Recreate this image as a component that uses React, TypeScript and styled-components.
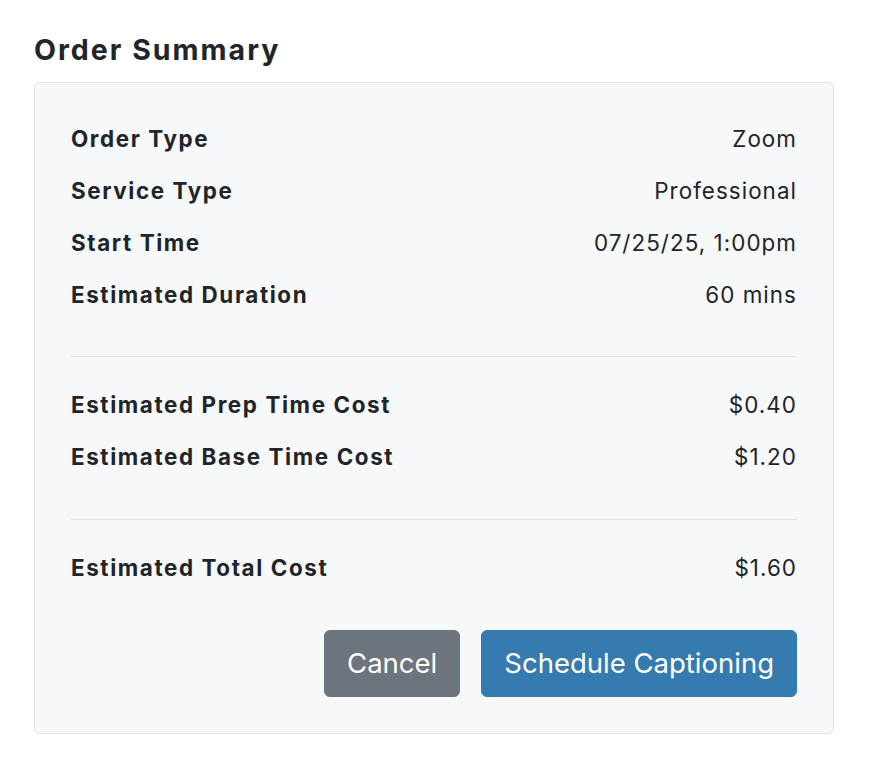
import styled, { createGlobalStyle } from "styled-components";

const GlobalStyle = createGlobalStyle`
  html, body {
    margin: 0;
    padding: 0;
    background: #ffffff;
  }
  body {
    font-family: Inter, "Liberation Sans", Arial, sans-serif;
    color: #212529;
    -webkit-font-smoothing: antialiased;
  }
`;

type Line = { label: string; value: string };

const details: Line[] = [
  { label: "Order Type", value: "Zoom" },
  { label: "Service Type", value: "Professional" },
  { label: "Start Time", value: "07/25/25, 1:00pm" },
  { label: "Estimated Duration", value: "60 mins" },
];

const costs: Line[] = [
  { label: "Estimated Prep Time Cost", value: "$0.40" },
  { label: "Estimated Base Time Cost", value: "$1.20" },
];

const SummaryRows = ({ items }: { items: Line[] }) => (
  <StyledSection>
    {items.map((item) => (
      <StyledRow key={item.label}>
        <StyledLabel>{item.label}</StyledLabel>
        <StyledValue>{item.value}</StyledValue>
      </StyledRow>
    ))}
  </StyledSection>
);

export default function App() {
  return (
    <>
      <GlobalStyle />
      <StyledPage>
        <StyledTitle>Order Summary</StyledTitle>
        <StyledCard>
          <SummaryRows items={details} />
          <StyledDivider />
          <SummaryRows items={costs} />
          <StyledDivider />
          <SummaryRows
            items={[{ label: "Estimated Total Cost", value: "$1.60" }]}
          />
          <StyledActions>
            <StyledButton $variant="secondary">Cancel</StyledButton>
            <StyledButton $variant="primary">Schedule Captioning</StyledButton>
          </StyledActions>
        </StyledCard>
      </StyledPage>
    </>
  );
}

const StyledPage = styled.div`
  padding: 33px 38px 27px 34px;
  display: flex;
  flex-direction: column;
`;

const StyledTitle = styled.h5`
  margin: 0 0 15px;
  font-size: 28.5px;
  font-weight: 700;
  line-height: 33.6px;
  letter-spacing: 2px;
`;

const StyledCard = styled.div`
  background: #f7f8fa;
  border: 1px solid #dee2e6;
  border-radius: 6px;
  padding: 39px 36px 36px;
  display: flex;
  flex-direction: column;
`;

const StyledSection = styled.div`
  display: flex;
  flex-direction: column;
  gap: 18.4px;
`;

const StyledRow = styled.div`
  display: flex;
  justify-content: space-between;
  align-items: center;
  font-size: 22.4px;
  line-height: 33.6px;
`;

const StyledLabel = styled.span`
  font-weight: 700;
  letter-spacing: 1.6px;
`;

const StyledValue = styled.span`
  font-weight: 400;
  letter-spacing: 1.05px;
  text-align: right;
`;

const StyledDivider = styled.hr`
  margin: 45px 0 31px;
  border: 0;
  border-top: 1px solid #dfe2e6;
  opacity: 1;
`;

const StyledActions = styled.div`
  display: flex;
  justify-content: flex-end;
  gap: 21px;
  margin-top: 46px;
`;

const StyledButton = styled.button<{ $variant: "primary" | "secondary" }>`
  font-family: inherit;
  font-size: 27.5px;
  font-weight: 400;
  line-height: 43px;
  padding: 11px 22px;
  border-radius: 6px;
  color: #ffffff;
  cursor: pointer;
  border: 1px solid
    ${(p) => (p.$variant === "primary" ? "#367bb0" : "#6c757d")};
  background: ${(p) => (p.$variant === "primary" ? "#367bb0" : "#6c757d")};
`;
